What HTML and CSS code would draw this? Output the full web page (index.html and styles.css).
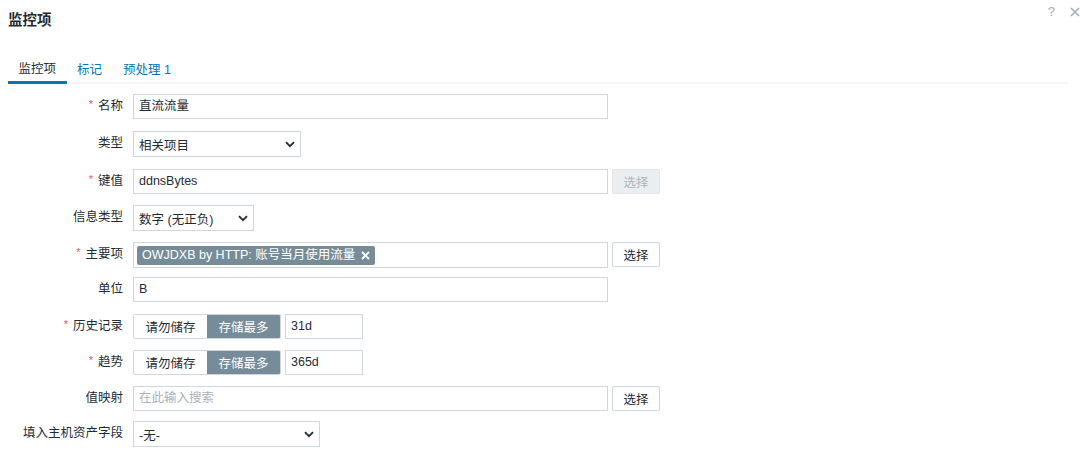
FILE: index.html
```html
<!DOCTYPE html>
<html lang="zh-CN">
<head>
<meta charset="utf-8">
<title>监控项</title>
<link rel="stylesheet" href="styles.css">
</head>
<body>
<div class="header">
  <h1 class="title">监控项</h1>
  <div class="controls">
    <span class="help">?</span>
    <svg class="close" width="10" height="10" viewBox="0 0 10 10"><path d="M1 1 L9 9 M9 1 L1 9" stroke="#a3adb3" stroke-width="1.6" fill="none"/></svg>
  </div>
</div>
<div class="content">
  <div class="tabs">
    <div class="tab active">监控项</div>
    <div class="tab">标记</div>
    <div class="tab">预处理 1</div>
  </div>
  <div class="form">
    <div class="label"><span class="req">*</span>名称</div>
    <div class="field"><div class="input w-wide">直流流量</div></div>

    <div class="label">类型</div>
    <div class="field"><div class="select w-type"><span>相关项目</span><svg width="10" height="7" viewBox="0 0 10 7"><path d="M1 1.2 L5 5.2 L9 1.2" stroke="#1f2c33" stroke-width="1.8" fill="none"/></svg></div></div>

    <div class="label"><span class="req">*</span>键值</div>
    <div class="field"><div class="input w-wide">ddnsBytes</div><div class="btn disabled">选择</div></div>

    <div class="label">信息类型</div>
    <div class="field"><div class="select w-info"><span>数字 (无正负)</span><svg width="10" height="7" viewBox="0 0 10 7"><path d="M1 1.2 L5 5.2 L9 1.2" stroke="#1f2c33" stroke-width="1.8" fill="none"/></svg></div></div>

    <div class="label"><span class="req">*</span>主要项</div>
    <div class="field"><div class="input multi w-wide"><span class="tag">OWJDXB by HTTP: 账号当月使用流量<svg width="9" height="9" viewBox="0 0 9 9"><path d="M1 1 L8 8 M8 1 L1 8" stroke="#ffffff" stroke-width="1.8" fill="none"/></svg></span></div><div class="btn">选择</div></div>

    <div class="label">单位</div>
    <div class="field"><div class="input w-wide">B</div></div>

    <div class="label"><span class="req">*</span>历史记录</div>
    <div class="field"><div class="seg"><span class="seg-item">请勿储存</span><span class="seg-item on">存储最多</span></div><div class="input w-period">31d</div></div>

    <div class="label"><span class="req">*</span>趋势</div>
    <div class="field"><div class="seg"><span class="seg-item">请勿储存</span><span class="seg-item on">存储最多</span></div><div class="input w-period">365d</div></div>

    <div class="label">值映射</div>
    <div class="field"><div class="input w-wide placeholder">在此输入搜索</div><div class="btn">选择</div></div>

    <div class="label">填入主机资产字段</div>
    <div class="field"><div class="select w-inv"><span>-无-</span><svg width="10" height="7" viewBox="0 0 10 7"><path d="M1 1.2 L5 5.2 L9 1.2" stroke="#1f2c33" stroke-width="1.8" fill="none"/></svg></div></div>
  </div>
</div>
</body>
</html>
```
FILE: styles.css
```css
body {
  margin: 0;
  background: #ffffff;
  color: #1f2c33;
  font-family: "Liberation Sans", "Noto Sans CJK SC", sans-serif;
  font-size: 12.5px;
}

.header {
  display: flex;
  align-items: flex-start;
  height: 50px;
  padding-left: 8px;
}

.title {
  margin: 11px 0 0 0;
  font-size: 14.5px;
  line-height: 18px;
  font-weight: bold;
  color: #1f2c33;
}

.controls {
  margin-left: auto;
  display: flex;
  align-items: center;
  gap: 15px;
  margin-top: 5px;
}

.help {
  color: #a3adb3;
  font-size: 13px;
  line-height: 14px;
}

.content {
  padding: 0 12px 0 8px;
}

.tabs {
  display: flex;
  height: 34px;
  box-sizing: border-box;
  border-bottom: 2px solid #f2f4f5;
}

.tab {
  box-sizing: border-box;
  height: 32px;
  padding: 4px 10.5px 0 10.5px;
  display: flex;
  align-items: center;
  color: #0a74b5;
  font-size: 12.5px;
}

.tab.active {
  color: #1f2c33;
  height: 34px;
  border-bottom: 3px solid #0a74b5;
  margin-bottom: -2px;
}

.form {
  margin-top: 10px;
  display: grid;
  grid-template-columns: 115px auto;
  grid-template-rows: 26px 27px 25px 26px 24px 26px 25px 25px 24px 26px;
  column-gap: 10px;
  row-gap: 11px;
}

.label {
  text-align: right;
  line-height: 25px;
  white-space: nowrap;
}

.req {
  color: #e45959;
  font-size: 11px;
  margin-right: 5px;
  position: relative;
  top: -2px;
}

.field {
  display: flex;
  align-items: flex-start;
  gap: 4px;
}

.input {
  box-sizing: border-box;
  height: 25px;
  border: 1px solid #cfd7dc;
  padding: 0 5px;
  line-height: 23px;
  white-space: nowrap;
  background: #ffffff;
}

.placeholder {
  color: #aab3b9;
}

.w-wide { width: 475px; }
.w-period { width: 78px; }

.multi {
  height: 26px;
  padding: 0 3px;
  display: flex;
  align-items: center;
}

.tag {
  display: inline-flex;
  align-items: center;
  gap: 6px;
  height: 19px;
  padding: 0 5px;
  background: #768d99;
  color: #ffffff;
  border-radius: 2px;
  line-height: 19px;
}

.select {
  box-sizing: border-box;
  height: 26px;
  border: 1px solid #cfd7dc;
  padding: 0 5px 0 5px;
  display: flex;
  align-items: center;
  justify-content: space-between;
  background: #ffffff;
}

.w-type { width: 168px; }
.w-info { width: 121px; }
.w-inv { width: 187px; }

.btn {
  box-sizing: border-box;
  width: 48px;
  height: 25px;
  border: 1px solid #cfd7dc;
  border-radius: 2px;
  display: flex;
  align-items: center;
  justify-content: center;
  background: #ffffff;
  color: #1f2c33;
}

.btn.disabled {
  background: #ebeef0;
  border-color: #e3e7ea;
  color: #acb6bc;
}

.seg {
  display: flex;
  height: 25px;
  box-sizing: border-box;
  border: 1px solid #cfd7dc;
  border-radius: 2px;
  overflow: hidden;
}

.seg-item {
  width: 73px;
  display: flex;
  align-items: center;
  justify-content: center;
  color: #1f2c33;
  background: #ffffff;
}

.seg-item.on {
  background: #768d99;
  color: #ffffff;
}
```
